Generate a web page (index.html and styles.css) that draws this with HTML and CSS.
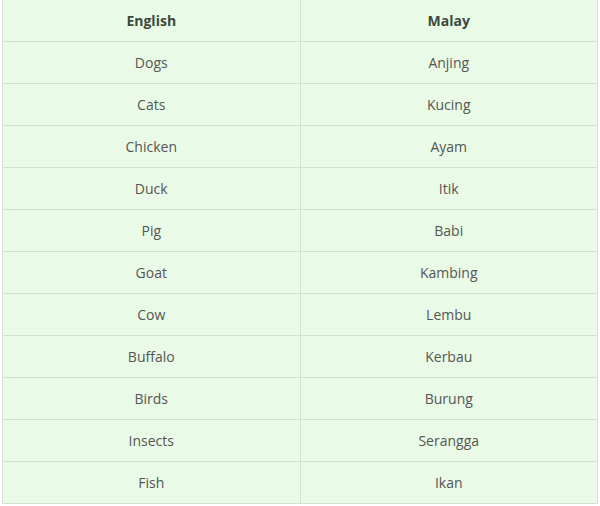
FILE: index.html
```html
<!DOCTYPE html>
<html>
<head>
<meta charset="utf-8">
<link rel="stylesheet" href="styles.css">
</head>
<body>
<table class="vocab">
<thead>
<tr><th>English</th><th>Malay</th></tr>
</thead>
<tbody>
<tr><td>Dogs</td><td>Anjing</td></tr>
<tr><td>Cats</td><td>Kucing</td></tr>
<tr><td>Chicken</td><td>Ayam</td></tr>
<tr><td>Duck</td><td>Itik</td></tr>
<tr><td>Pig</td><td>Babi</td></tr>
<tr><td>Goat</td><td>Kambing</td></tr>
<tr><td>Cow</td><td>Lembu</td></tr>
<tr><td>Buffalo</td><td>Kerbau</td></tr>
<tr><td>Birds</td><td>Burung</td></tr>
<tr><td>Insects</td><td>Serangga</td></tr>
<tr><td>Fish</td><td>Ikan</td></tr>
</tbody>
</table>
</body>
</html>
```

FILE: styles.css
```css
html, body {
  margin: 0;
  padding: 0;
  background: #fff;
}
body {
  padding: 0 2px;
  font-family: "Open Sans", "Liberation Sans", sans-serif;
  font-size: 14px;
  color: #555;
}
.vocab {
  width: 596px;
  border-collapse: collapse;
  table-layout: fixed;
  background: #e9fbe6;
  border-left: 1px solid #d8dcd8;
  border-right: 1px solid #d8dcd8;
  border-bottom: 1px solid #d8dcd8;
}
.vocab th, .vocab td {
  height: 41px;
  padding: 0;
  text-align: center;
  vertical-align: middle;
  border-bottom: 1px solid #d2e2cf;
  border-right: 1px solid #d2e2cf;
}
.vocab th {
  font-weight: 700;
  color: #3d4a3d;
}
.vocab td {
  color: #555;
}
.vocab tr > :last-child {
  border-right: 1px solid #d8dcd8;
}
```
